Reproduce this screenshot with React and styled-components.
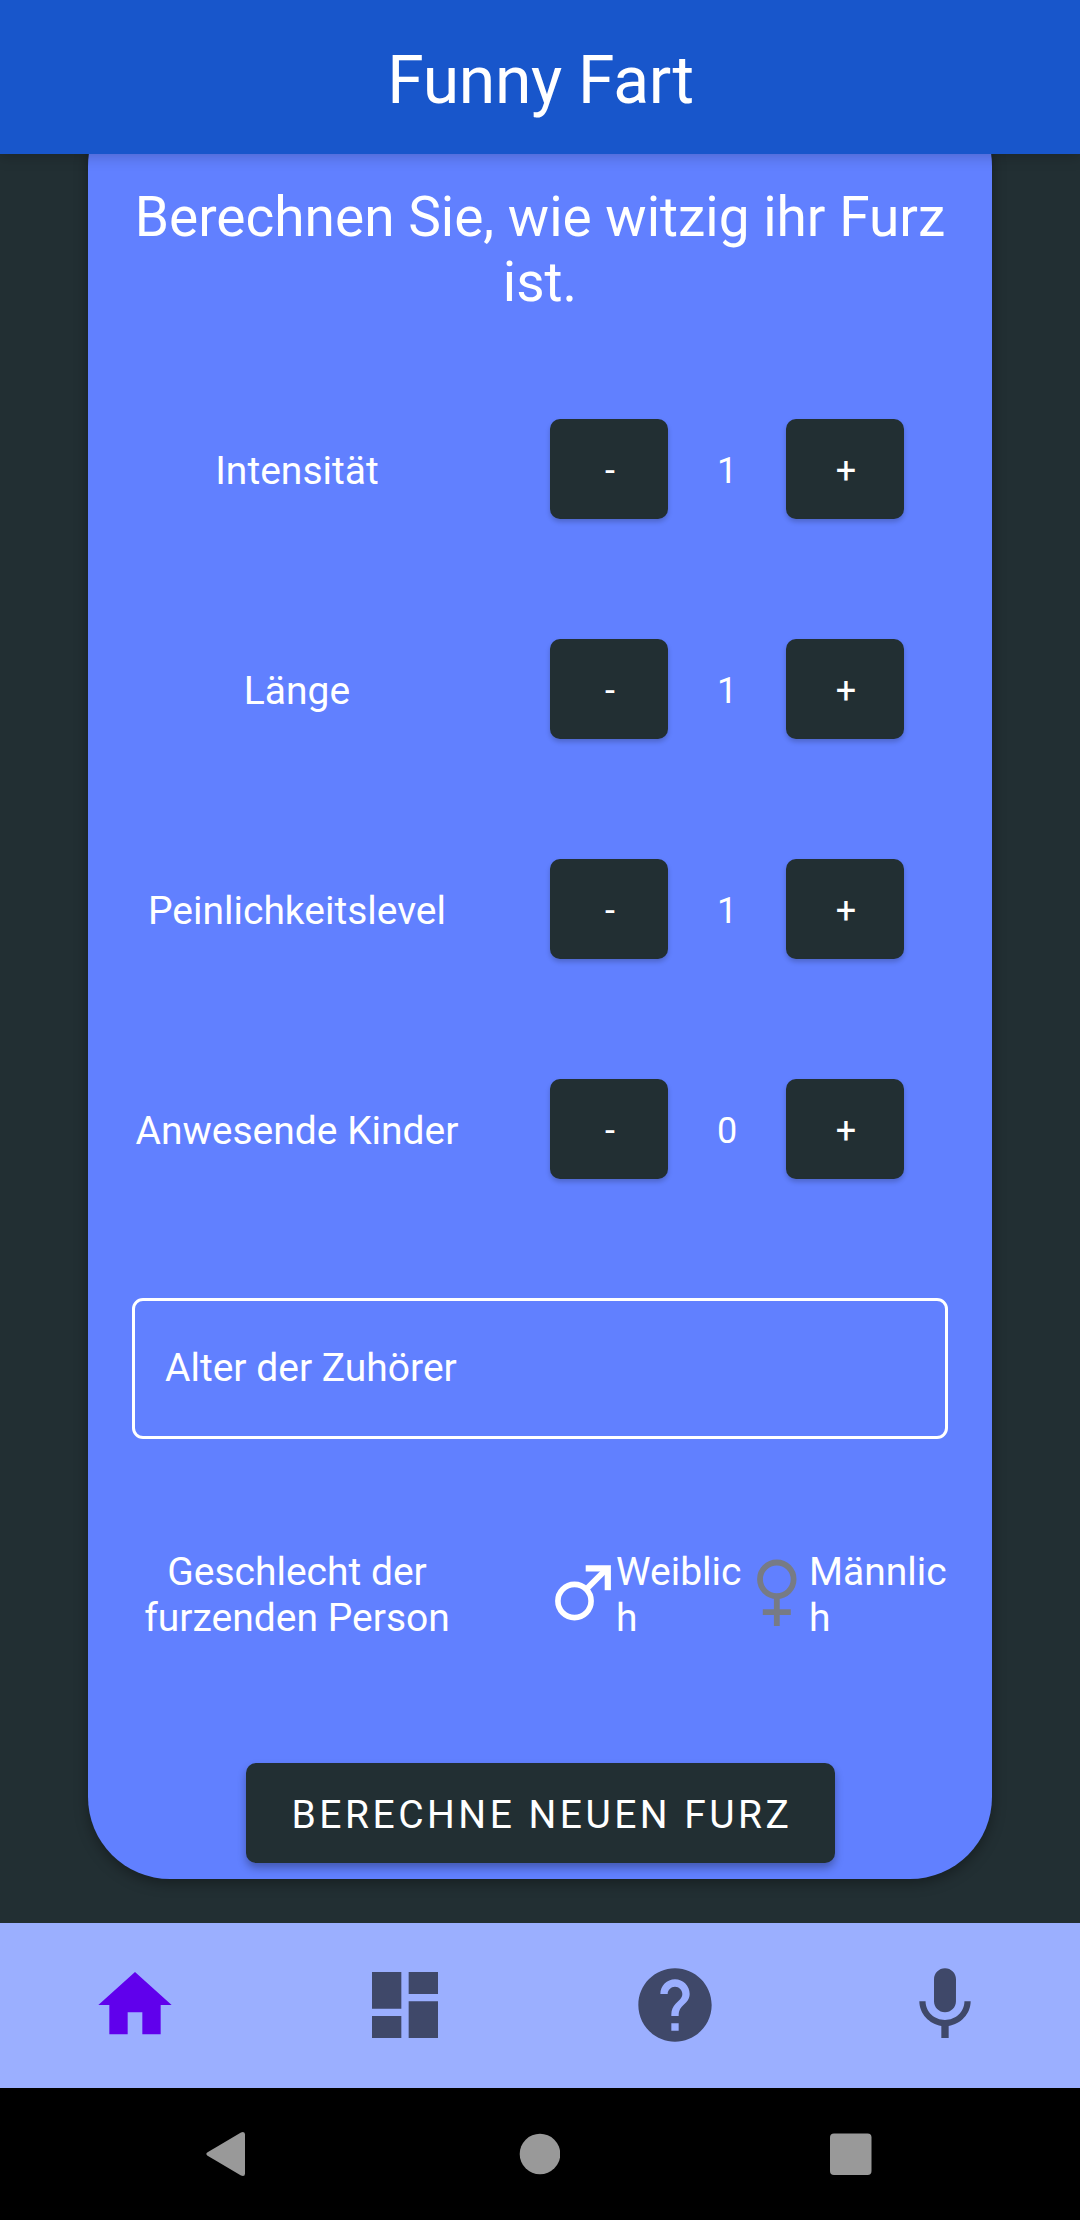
import React, { useState } from "react";
import styled, { createGlobalStyle } from "styled-components";

const GlobalStyle = createGlobalStyle`
  *, *::before, *::after { box-sizing: border-box; }
  body { margin: 0; background: #222f33; }
  button { font: inherit; border: 0; margin: 0; padding: 0; cursor: pointer; }
`;

const Screen = styled.div`
  width: 1080px;
  height: 2220px;
  display: flex;
  flex-direction: column;
  overflow: hidden;
  background: #222f33;
  color: #fff;
  font-family: Roboto, "Liberation Sans", sans-serif;
  font-size: 39px;
`;

const Header = styled.header`
  flex: none;
  height: 154px;
  display: flex;
  align-items: center;
  justify-content: center;
  padding: 7px 0 0 1px;
  background: #1856cb;
  box-shadow: 0 2px 14px rgba(0, 0, 0, 0.22);
  z-index: 1;
`;

const Title = styled.h1`
  margin: 0;
  font-size: 66px;
  font-weight: 400;
  letter-spacing: -0.3px;
`;

const ScrollArea = styled.main`
  flex: 1;
  min-height: 0;
  overflow: hidden;
  padding: 0 88px;
`;

const Card = styled.section`
  height: 1795px;
  margin-top: -70px;
  padding: 101px 44px 16px;
  display: flex;
  flex-direction: column;
  border-radius: 82px;
  background: #6180ff;
  box-shadow: 0 4px 14px rgba(0, 0, 0, 0.35);
`;

const Heading = styled.h2`
  margin: 0 0 105px;
  font-size: 55px;
  line-height: 64.5px;
  font-weight: 400;
  text-align: center;
`;

const Rows = styled.div`
  display: flex;
  flex-direction: column;
  gap: 120px;
`;

const Row = styled.div`
  display: grid;
  grid-template-columns: 330px 1fr;
  column-gap: 88px;
  align-items: center;
`;

const Label = styled.div`
  font-size: 39px;
  line-height: 46px;
  text-align: center;
  padding-top: ${(p) => (p.$tall ? 0 : 3)}px;
`;

const Stepper = styled.div`
  display: grid;
  grid-template-columns: repeat(3, 118px);
  align-items: center;
`;

const RaisedButton = styled.button`
  height: 100px;
  border-radius: 10px;
  background: #222f33;
  color: #fff;
  letter-spacing: 0.0892857em;
  box-shadow: 0 3px 5px rgba(0, 0, 0, 0.2);
`;

const StepButton = styled(RaisedButton)`
  font-size: 36px;
  letter-spacing: 0;
  padding: 4px 0 0 2px;
`;

const Value = styled.span`
  font-size: 36px;
  text-align: center;
  padding-top: 4px;
`;

const AgeField = styled.div`
  height: 141px;
  margin-top: 119px;
  padding: 0 30px 1px;
  display: flex;
  align-items: center;
  border: 3px solid #fff;
  border-radius: 11px;
  font-size: 39px;
`;

const GenderRow = styled(Row)`
  margin: 110px 0 122px;
`;

const RadioGroup = styled.div`
  display: flex;
`;

const Radio = styled.div`
  display: flex;
  align-items: center;
  width: ${(p) => p.$width}px;
`;

const RadioIcon = styled.svg`
  flex: none;
  width: 66px;
  height: 92px;
  fill: none;
  stroke: ${(p) => (p.$selected ? "#ffffff" : "#777b85")};
`;

const RadioText = styled.span`
  flex: 1;
  min-width: 0;
  font-size: 39px;
  line-height: 46px;
  word-break: break-all;
`;

const SubmitButton = styled(RaisedButton)`
  align-self: center;
  width: 589px;
  font-size: 39px;
  padding: 4px 0 0 4px;
  box-shadow: 0 5px 8px rgba(0, 0, 0, 0.3);
`;

const TabBar = styled.nav`
  flex: none;
  height: 165px;
  display: grid;
  grid-template-columns: repeat(4, 1fr);
  background: #9bafff;
`;

const Tab = styled.button`
  display: flex;
  align-items: center;
  justify-content: center;
  padding-bottom: 1px;
  background: none;
  color: ${(p) => (p.$active ? "#6000ec" : "#3f4869")};
`;

const TabIcon = styled.svg`
  width: 88px;
  height: 88px;
  fill: currentColor;
`;

const SystemBar = styled.footer`
  flex: none;
  height: 132px;
  padding: 0 208px 0 205px;
  display: flex;
  align-items: center;
  justify-content: space-between;
  background: #000;
`;

const SystemIcon = styled.svg`
  width: 42px;
  height: 48px;
  fill: #999;
`;

const TABS = [
  { id: "Start", d: "M10 20v-6h4v6h5v-8h3L12 3 2 12h3v8z" },
  {
    id: "Dashboard",
    d: "M3 13h8V3H3v10zm0 8h8v-6H3v6zm10 0h8V11h-8v10zm0-18v6h8V3h-8z",
  },
  {
    id: "Hilfe",
    d: "M12 2C6.48 2 2 6.48 2 12s4.48 10 10 10 10-4.48 10-10S17.52 2 12 2zm1 17h-2v-2h2v2zm2.07-7.75l-.9.92C13.45 12.9 13 13.5 13 15h-2v-.5c0-1.1.45-2.1 1.17-2.83l1.24-1.26c.37-.36.59-.86.59-1.41 0-1.1-.9-2-2-2s-2 .9-2 2H8c0-2.21 1.79-4 4-4s4 1.79 4 4c0 .88-.36 1.68-.93 2.25z",
  },
  {
    id: "Aufnahme",
    d: "M12 14c1.66 0 2.99-1.34 2.99-3L15 5c0-1.66-1.34-3-3-3S9 3.34 9 5v6c0 1.66 1.34 3 3 3zm5.3-3c0 3-2.54 5.1-5.3 5.1S6.7 14 6.7 11H5c0 3.41 2.72 6.23 6 6.72V21h2v-3.28c3.28-.48 6-3.3 6-6.72h-1.7z",
  },
];

function StepperRow({ label, initial }) {
  const [value, setValue] = useState(initial);
  return (
    <Row>
      <Label>{label}</Label>
      <Stepper>
        <StepButton onClick={() => setValue(Math.max(0, value - 1))}>-</StepButton>
        <Value>{value}</Value>
        <StepButton onClick={() => setValue(value + 1)}>+</StepButton>
      </Stepper>
    </Row>
  );
}

export default function App() {
  const [tab, setTab] = useState("Start");
  return (
    <Screen>
      <GlobalStyle />
      <Header>
        <Title>Funny Fart</Title>
      </Header>
      <ScrollArea>
        <Card>
          <Heading>Berechnen Sie, wie witzig ihr Furz ist.</Heading>
          <Rows>
            <StepperRow label="Intensität" initial={1} />
            <StepperRow label="Länge" initial={1} />
            <StepperRow label="Peinlichkeitslevel" initial={1} />
            <StepperRow label="Anwesende Kinder" initial={0} />
          </Rows>
          <AgeField>Alter der Zuhörer</AgeField>
          <GenderRow>
            <Label $tall>Geschlecht der furzenden Person</Label>
            <RadioGroup>
              <Radio $width={193}>
                <RadioIcon $selected viewBox="0 0 66 92">
                  <circle cx="24.5" cy="52" r="16.6" strokeWidth="5.6" />
                  <path d="M37 39.5L57 19.5" strokeWidth="6" />
                  <path d="M35.7 19.4H57.8V41.3" strokeWidth="6.2" />
                </RadioIcon>
                <RadioText>Weiblich</RadioText>
              </Radio>
              <Radio $width={205}>
                <RadioIcon viewBox="0 0 66 92">
                  <circle cx="33.8" cy="30.3" r="16.8" strokeWidth="5.8" />
                  <path d="M33.8 47V77M19.8 63.2H47.8" strokeWidth="5.8" />
                </RadioIcon>
                <RadioText>Männlich</RadioText>
              </Radio>
            </RadioGroup>
          </GenderRow>
          <SubmitButton>BERECHNE NEUEN FURZ</SubmitButton>
        </Card>
      </ScrollArea>
      <TabBar>
        {TABS.map((t) => (
          <Tab key={t.id} $active={t.id === tab} onClick={() => setTab(t.id)}>
            <TabIcon viewBox="0 0 24 24">
              <path d={t.d} />
            </TabIcon>
          </Tab>
        ))}
      </TabBar>
      <SystemBar>
        <SystemIcon viewBox="0 0 42 48">
          <path d="M2.6 22.3L36 2.4Q40 1 40 4.5V43.5Q40 47 36 45.6L2.6 25.8Q0 24 2.6 22.3Z" />
        </SystemIcon>
        <SystemIcon viewBox="0 0 42 48">
          <circle cx="22" cy="24" r="20.3" />
        </SystemIcon>
        <SystemIcon viewBox="0 0 42 48">
          <rect x="0" y="3.5" width="41.5" height="41.5" rx="4" />
        </SystemIcon>
      </SystemBar>
    </Screen>
  );
}
